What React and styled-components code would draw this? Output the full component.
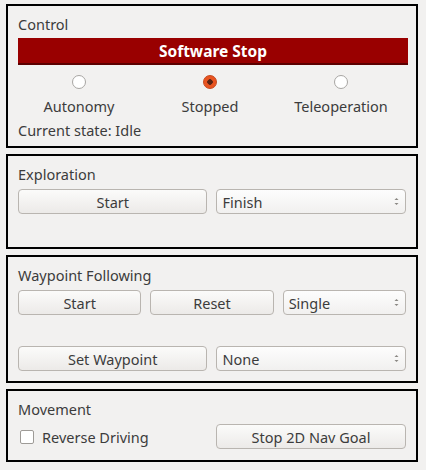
import React from 'react';
import styled, { createGlobalStyle } from 'styled-components';

const GlobalStyle = createGlobalStyle`
  body {
    margin: 0;
    background: #f2f1f0;
    font-family: 'Noto Sans', 'DejaVu Sans', sans-serif;
    font-size: 14.5px;
    color: #3c3c3c;
  }
`;

const Page = styled.div`
  display: flex;
  flex-direction: column;
  gap: 6px;
  padding: 4px 0 0 6px;
  width: 412px;
`;

const Panel = styled.div`
  box-sizing: border-box;
  width: 412px;
  height: ${p => p.h}px;
  border: 2px solid #000;
  padding: 8px 10px 0 10px;
  display: flex;
  flex-direction: column;
`;

const Title = styled.div`
  height: 20px;
  line-height: 20px;
`;

const StopBar = styled.button`
  margin-top: 4px;
  height: 27px;
  width: 390px;
  border: none;
  border-bottom: 2px solid #5c0000;
  background: #990000;
  color: #fff;
  font-family: inherit;
  font-size: 15.5px;
  font-weight: 700;
  padding: 0;
`;

const RadioRow = styled.div`
  display: grid;
  grid-template-columns: 122px 140px 122px;
  margin-top: 10px;
`;

const RadioItem = styled.div`
  display: flex;
  flex-direction: column;
  align-items: center;
  gap: 7px;
`;

const Dot = styled.span`
  box-sizing: border-box;
  width: 14px;
  height: 14px;
  border-radius: 50%;
  border: 1px solid ${p => (p.on ? '#c4471c' : '#a8a6a3')};
  background: ${p => (p.on ? 'radial-gradient(circle, #5a2414 0 2.5px, #e95420 3px)' : '#fff')};
`;

const State = styled.div`
  margin-top: 4px;
`;

const Row = styled.div`
  display: flex;
  gap: 9px;
  margin-top: ${p => p.top || 0}px;
`;

const Button = styled.button`
  box-sizing: border-box;
  width: ${p => p.w}px;
  height: 25px;
  border: 1px solid #b9b5b0;
  border-radius: 4px;
  background: linear-gradient(#fbfbfa, #eceae8);
  color: #3c3c3c;
  font-family: inherit;
  font-size: 14.5px;
  padding: 0;
`;

const Combo = styled.div`
  box-sizing: border-box;
  width: ${p => p.w}px;
  height: 25px;
  border: 1px solid #b9b5b0;
  border-radius: 4px;
  background: linear-gradient(#fdfdfd, #f1f0ef);
  display: flex;
  align-items: center;
  justify-content: space-between;
  padding: 0 5px 0 5px;
  color: #3c3c3c;
`;

const Check = styled.label`
  box-sizing: border-box;
  display: flex;
  align-items: center;
  gap: 8px;
  padding-left: 2px;
  width: 189px;
`;

const Box = styled.span`
  box-sizing: border-box;
  width: 14px;
  height: 14px;
  border: 1px solid #9e9b97;
  border-radius: 2px;
  background: #fff;
`;

const Arrows = () => (
  <svg width="7" height="11" viewBox="0 0 7 11">
    <path d="M1.5 4 L3.5 2 L5.5 4 Z" fill="#8a8783" />
    <path d="M1.5 7 L3.5 9 L5.5 7 Z" fill="#8a8783" />
  </svg>
);

const Select = ({ w, value }) => (
  <Combo w={w}>
    <span>{value}</span>
    <Arrows />
  </Combo>
);

export default function App() {
  return (
    <>
      <GlobalStyle />
      <Page>
        <Panel h={144}>
          <Title>Control</Title>
          <StopBar>Software Stop</StopBar>
          <RadioRow>
            <RadioItem><Dot /><span>Autonomy</span></RadioItem>
            <RadioItem><Dot on /><span>Stopped</span></RadioItem>
            <RadioItem><Dot /><span>Teleoperation</span></RadioItem>
          </RadioRow>
          <State>Current state: Idle</State>
        </Panel>
        <Panel h={95}>
          <Title>Exploration</Title>
          <Row top={5}>
            <Button w={190}>Start</Button>
            <Select w={190} value="Finish" />
          </Row>
        </Panel>
        <Panel h={128}>
          <Title>Waypoint Following</Title>
          <Row top={5}>
            <Button w={124}>Start</Button>
            <Button w={124}>Reset</Button>
            <Select w={124} value="Single" />
          </Row>
          <Row top={31}>
            <Button w={190}>Set Waypoint</Button>
            <Select w={190} value="None" />
          </Row>
        </Panel>
        <Panel h={73}>
          <Title>Movement</Title>
          <Row top={5}>
            <Check><Box /><span>Reverse Driving</span></Check>
            <Button w={190}>Stop 2D Nav Goal</Button>
          </Row>
        </Panel>
      </Page>
    </>
  );
}
